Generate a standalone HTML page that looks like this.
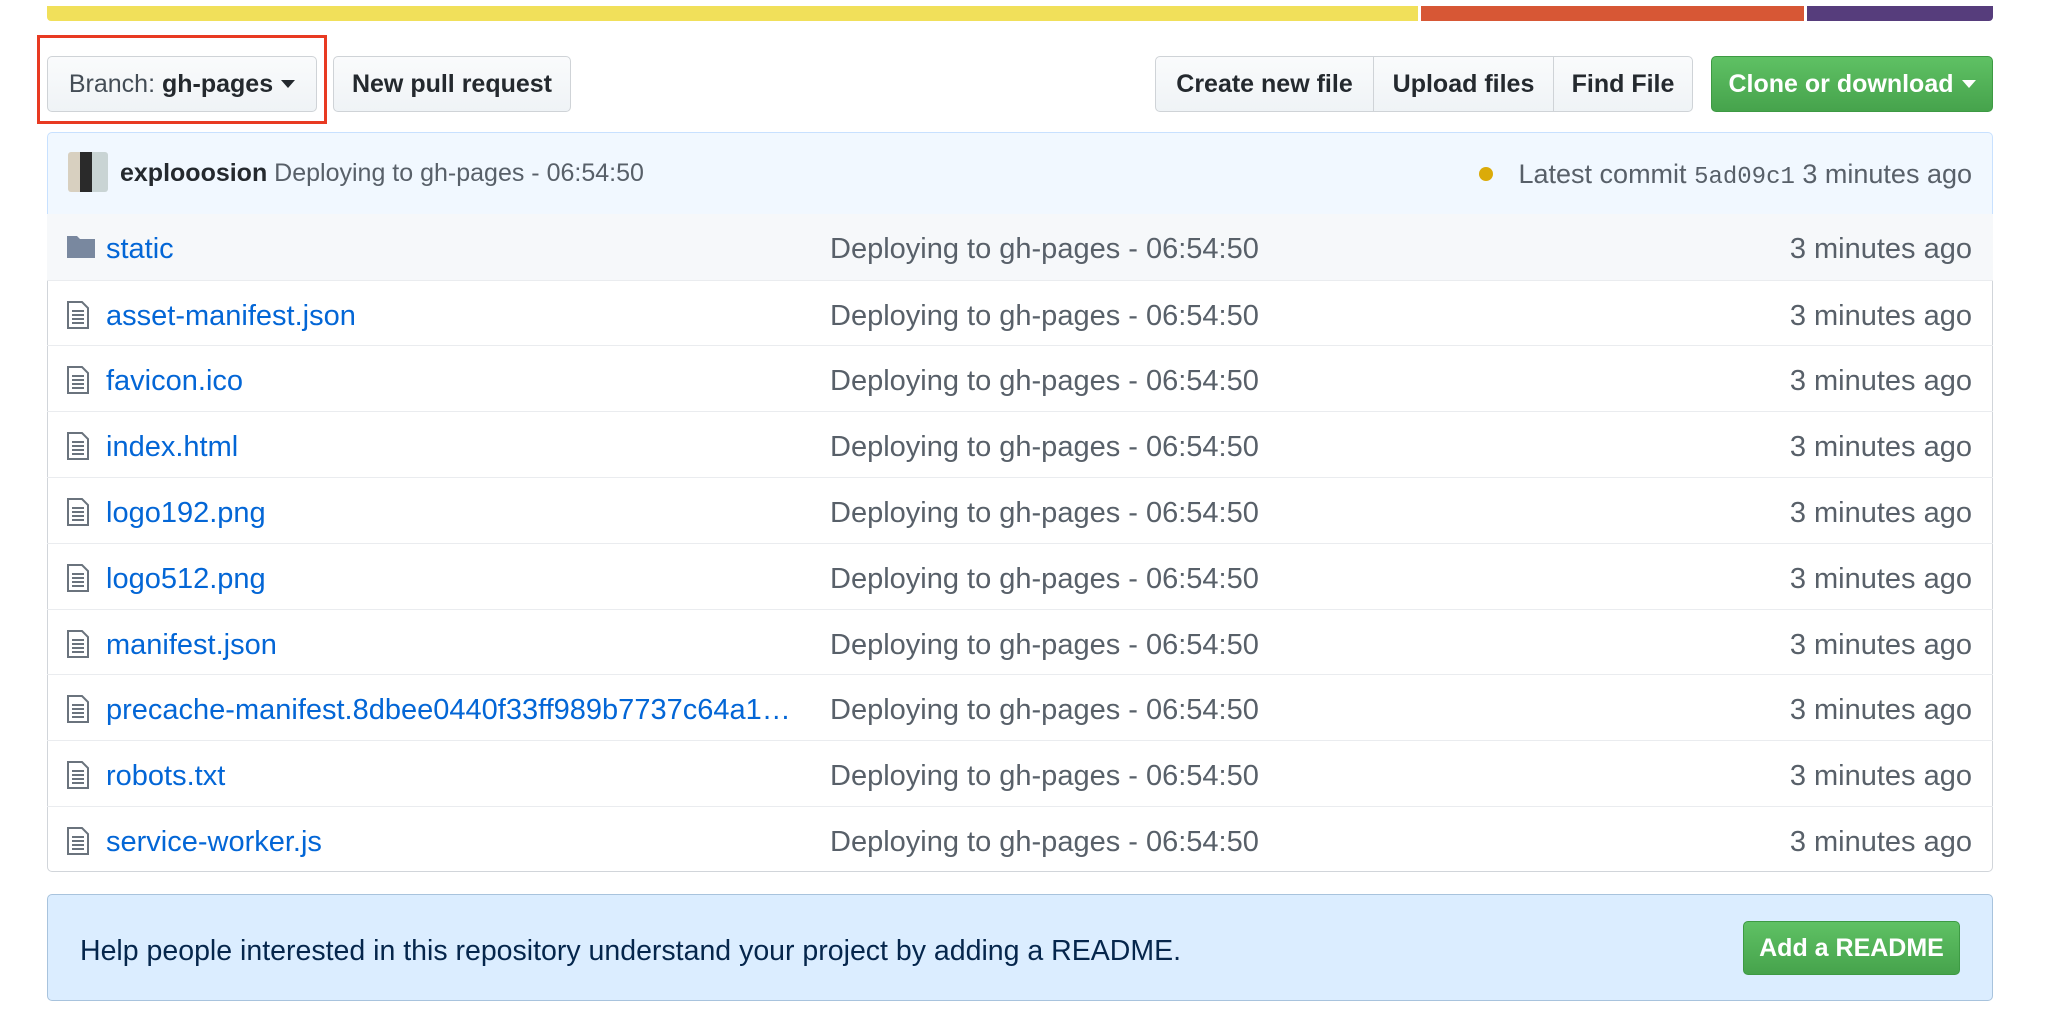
<!DOCTYPE html>
<html><head><meta charset="utf-8"><style>
*{box-sizing:border-box;margin:0;padding:0}
body{width:2048px;height:1032px;background:#fff;font-family:"Liberation Sans",sans-serif;position:relative;overflow:hidden;color:#24292e}
.abs{position:absolute}
.bar{top:6px;height:15px;left:47px;width:1946px;display:flex;border-radius:0 0 4px 4px;overflow:hidden}
.btn{position:absolute;top:56px;height:56px;border:1px solid #cfd3d7;border-radius:5px;background:linear-gradient(#fafbfc,#eff3f6);font-weight:bold;font-size:25px;display:flex;align-items:center;justify-content:center;color:#24292e}
.caret{display:inline-block;width:0;height:0;border-left:7px solid transparent;border-right:7px solid transparent;border-top:8px solid currentColor;margin-left:8px;vertical-align:middle}
.row{position:absolute;left:47px;width:1946px;height:66px;border-top:1px solid #eaecef;font-size:29px}
.row .n{position:absolute;left:59px;top:19px;color:#0366d6;white-space:nowrap}
.row .m{position:absolute;left:783px;top:19px;color:#586069}
.row .t{position:absolute;right:21px;top:19px;color:#586069}
.row svg{position:absolute;left:20px;top:20px}
</style></head><body>
<div class="abs bar"><div style="width:1371px;background:#f1e05a"></div><div style="width:3px;background:#fff"></div><div style="width:383px;background:#d75735"></div><div style="width:3px;background:#fff"></div><div style="flex:1;background:#563d7c"></div></div>
<div class="abs" style="left:37px;top:35px;width:290px;height:89px;border:3px solid #e83a22"></div>
<div class="btn" style="left:47px;width:270px;font-weight:normal;color:#444d56">Branch:&nbsp;<b style="color:#24292e">gh-pages</b><span class="caret" style="color:#24292e"></span></div>
<div class="btn" style="left:333px;width:238px">New pull request</div>
<div class="btn" style="left:1155px;width:538px;justify-content:flex-start">
<div style="width:218px;text-align:center;border-right:1px solid #cfd3d7;height:100%;line-height:54px">Create new file</div>
<div style="width:180px;text-align:center;border-right:1px solid #cfd3d7;height:100%;line-height:54px">Upload files</div>
<div style="flex:1;text-align:center">Find File</div></div>
<div class="btn" style="left:1711px;width:282px;color:#fff;background:linear-gradient(#5fc164,#46a34c);border-color:#3d9a43">Clone or download<span class="caret"></span></div>
<div class="abs" style="left:47px;top:132px;width:1946px;height:83px;background:#f1f8ff;border:1px solid #c8e1ff;border-radius:5px 5px 0 0"></div>
<div class="abs" style="left:68px;top:152px;width:40px;height:40px;border-radius:3px;background:linear-gradient(90deg,#d8d0c0 0,#d8d0c0 30%,#2a2a2a 30%,#2a2a2a 60%,#c9d4d4 60%)"></div>
<div class="abs" style="left:120px;top:159px;font-size:25px;color:#586069"><b style="color:#24292e">explooosion</b> Deploying to gh-pages - 06:54:50</div>
<div class="abs" style="left:1479px;top:167px;width:14px;height:14px;border-radius:50%;background:#dbab09"></div>
<div class="abs" style="right:76px;top:159px;font-size:27px;color:#586069">Latest commit <span style="font-family:'Liberation Mono',monospace;font-size:24px">5ad09c1</span> 3 minutes ago</div>
<div class="abs" style="left:47px;top:214px;width:1946px;height:658px;border:1px solid #d1d5da;border-top:none;border-radius:0 0 5px 5px"></div>
<div class="row" style="top:214px;background:#f6f8fa;border-top:none"><svg width="28" height="24" viewBox="0 0 28 24"><path d="M0 2h10l3 3h15v19H0z" fill="#79889f"/></svg><span class="n">static</span><span class="m">Deploying to gh-pages - 06:54:50</span><span class="t">3 minutes ago</span></div>
<div class="row" style="top:280px"><svg width="22" height="28" viewBox="0 0 22 28"><path d="M1 1h14l6 6v20H1z" fill="none" stroke="#6a737d" stroke-width="2"/><path d="M5 10h12M5 14h12M5 18h12M5 22h12" stroke="#6a737d" stroke-width="2"/></svg><span class="n">asset-manifest.json</span><span class="m">Deploying to gh-pages - 06:54:50</span><span class="t">3 minutes ago</span></div>
<div class="row" style="top:345px"><svg width="22" height="28" viewBox="0 0 22 28"><path d="M1 1h14l6 6v20H1z" fill="none" stroke="#6a737d" stroke-width="2"/><path d="M5 10h12M5 14h12M5 18h12M5 22h12" stroke="#6a737d" stroke-width="2"/></svg><span class="n">favicon.ico</span><span class="m">Deploying to gh-pages - 06:54:50</span><span class="t">3 minutes ago</span></div>
<div class="row" style="top:411px"><svg width="22" height="28" viewBox="0 0 22 28"><path d="M1 1h14l6 6v20H1z" fill="none" stroke="#6a737d" stroke-width="2"/><path d="M5 10h12M5 14h12M5 18h12M5 22h12" stroke="#6a737d" stroke-width="2"/></svg><span class="n">index.html</span><span class="m">Deploying to gh-pages - 06:54:50</span><span class="t">3 minutes ago</span></div>
<div class="row" style="top:477px"><svg width="22" height="28" viewBox="0 0 22 28"><path d="M1 1h14l6 6v20H1z" fill="none" stroke="#6a737d" stroke-width="2"/><path d="M5 10h12M5 14h12M5 18h12M5 22h12" stroke="#6a737d" stroke-width="2"/></svg><span class="n">logo192.png</span><span class="m">Deploying to gh-pages - 06:54:50</span><span class="t">3 minutes ago</span></div>
<div class="row" style="top:543px"><svg width="22" height="28" viewBox="0 0 22 28"><path d="M1 1h14l6 6v20H1z" fill="none" stroke="#6a737d" stroke-width="2"/><path d="M5 10h12M5 14h12M5 18h12M5 22h12" stroke="#6a737d" stroke-width="2"/></svg><span class="n">logo512.png</span><span class="m">Deploying to gh-pages - 06:54:50</span><span class="t">3 minutes ago</span></div>
<div class="row" style="top:609px"><svg width="22" height="28" viewBox="0 0 22 28"><path d="M1 1h14l6 6v20H1z" fill="none" stroke="#6a737d" stroke-width="2"/><path d="M5 10h12M5 14h12M5 18h12M5 22h12" stroke="#6a737d" stroke-width="2"/></svg><span class="n">manifest.json</span><span class="m">Deploying to gh-pages - 06:54:50</span><span class="t">3 minutes ago</span></div>
<div class="row" style="top:674px"><svg width="22" height="28" viewBox="0 0 22 28"><path d="M1 1h14l6 6v20H1z" fill="none" stroke="#6a737d" stroke-width="2"/><path d="M5 10h12M5 14h12M5 18h12M5 22h12" stroke="#6a737d" stroke-width="2"/></svg><span class="n">precache-manifest.8dbee0440f33ff989b7737c64a1…</span><span class="m">Deploying to gh-pages - 06:54:50</span><span class="t">3 minutes ago</span></div>
<div class="row" style="top:740px"><svg width="22" height="28" viewBox="0 0 22 28"><path d="M1 1h14l6 6v20H1z" fill="none" stroke="#6a737d" stroke-width="2"/><path d="M5 10h12M5 14h12M5 18h12M5 22h12" stroke="#6a737d" stroke-width="2"/></svg><span class="n">robots.txt</span><span class="m">Deploying to gh-pages - 06:54:50</span><span class="t">3 minutes ago</span></div>
<div class="row" style="top:806px"><svg width="22" height="28" viewBox="0 0 22 28"><path d="M1 1h14l6 6v20H1z" fill="none" stroke="#6a737d" stroke-width="2"/><path d="M5 10h12M5 14h12M5 18h12M5 22h12" stroke="#6a737d" stroke-width="2"/></svg><span class="n">service-worker.js</span><span class="m">Deploying to gh-pages - 06:54:50</span><span class="t">3 minutes ago</span></div>
<div class="abs" style="left:47px;top:894px;width:1946px;height:107px;background:#dbedff;border:1px solid #a8c3dd;border-radius:5px"></div>
<div class="abs" style="left:80px;top:935px;font-size:28.5px;color:#05264c">Help people interested in this repository understand your project by adding a README.</div>
<div class="btn" style="left:1743px;top:921px;width:217px;height:54px;color:#fff;background:linear-gradient(#5fc164,#46a34c);border-color:#3d9a43">Add a README</div>
</body></html>
